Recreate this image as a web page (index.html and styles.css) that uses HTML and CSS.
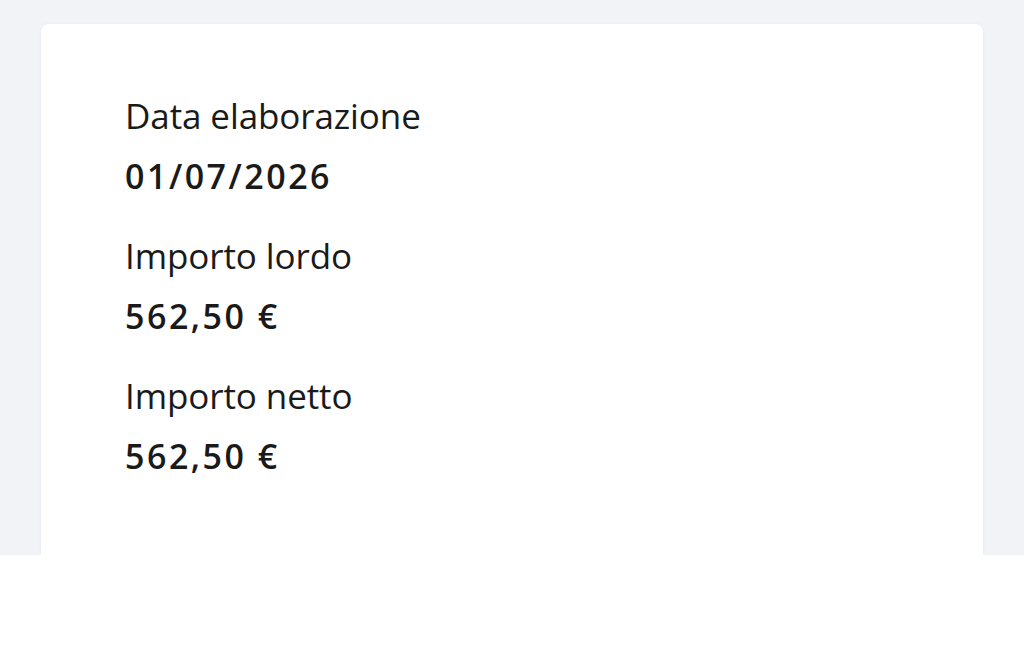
FILE: index.html
```html
<!DOCTYPE html>
<html lang="it">
<head>
<meta charset="utf-8">
<title>Dettaglio pagamento</title>
<link rel="stylesheet" href="styles.css">
</head>
<body>
<div class="backdrop">
  <section class="card">
    <dl class="details">
      <div class="item">
        <dt class="label">Data elaborazione</dt>
        <dd class="value">01/07/2026</dd>
      </div>
      <div class="item">
        <dt class="label">Importo lordo</dt>
        <dd class="value">562,50 €</dd>
      </div>
      <div class="item">
        <dt class="label">Importo netto</dt>
        <dd class="value">562,50 €</dd>
      </div>
    </dl>
  </section>
</div>
</body>
</html>
```
FILE: styles.css
```css
html, body {
  margin: 0;
  padding: 0;
  background: #ffffff;
}
body {
  font-family: "Open Sans", "Noto Sans", "Liberation Sans", sans-serif;
  color: #1a1a1a;
}
.backdrop {
  background: #f2f3f7;
  height: 555px;
  padding: 24px 41px 0 41px;
  box-sizing: border-box;
  display: flex;
}
.card {
  flex: 1;
  background: #ffffff;
  border-radius: 8px 8px 0 0;
  padding: 72px 84px 0 84px;
  box-shadow: 0 0 4px rgba(30, 40, 70, 0.04);
}
.details {
  margin: 0;
  display: flex;
  flex-direction: column;
  gap: 40px;
}
.item {
  display: flex;
  flex-direction: column;
  gap: 20px;
}
.label {
  margin: 0;
  font-size: 35px;
  line-height: 40px;
  font-weight: 400;
  letter-spacing: -0.1px;
}
.value {
  margin: 0;
  font-size: 34px;
  line-height: 40px;
  font-weight: 600;
  letter-spacing: 2.5px;
}
```
